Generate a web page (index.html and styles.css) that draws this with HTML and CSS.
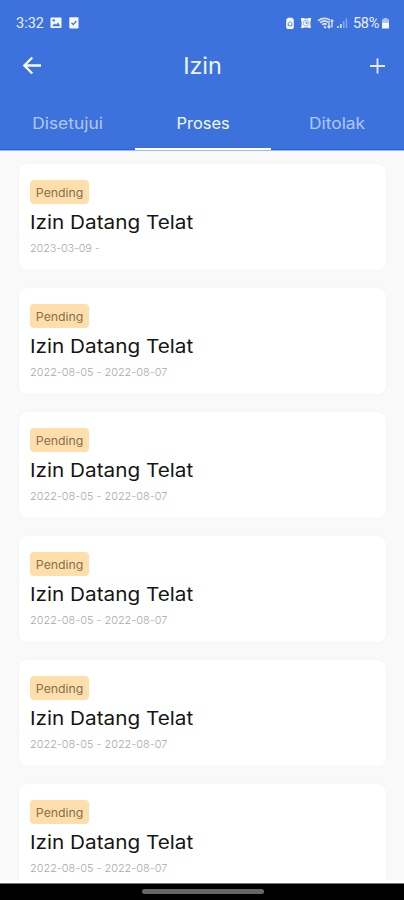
FILE: index.html
```
<!DOCTYPE html>
<html lang="id">
<head>
<meta charset="utf-8">
<title>Izin</title>
<link rel="stylesheet" href="styles.css">
</head>
<body>
<div class="screen">
  <header class="header">
    <div class="status">
      <div class="status-left">
        <span class="clock">3:32</span>
        <svg class="ic-image" width="12" height="12" viewBox="0 0 12 12"><rect x=".5" y=".5" width="11" height="10.5" rx="1" fill="#f4f8ff"/><path d="M2 9.3 4.5 6.4l1.700 1.400L8 5.300l2.200 4z" fill="#3d72dc"/><rect x="2.500" y="2.400" width="2.400" height="2" fill="#3d72dc"/></svg>
        <svg class="ic-check" width="10" height="12" viewBox="0 0 10 12"><rect x=".3" y=".3" width="9.200" height="11.200" rx="1" fill="#f4f8ff"/><path d="M2.500 5.800 4.300 7.600 7.300 4" fill="none" stroke="#3d72dc" stroke-width="1.300"/></svg>
      </div>
      <div class="status-right">
        <svg width="10" height="13" viewBox="0 0 10 13"><path d="M3 .7h4l1.800 1.700v8L7.800 12H2.200L1.200 10.400v-8z" fill="#f4f8ff"/><path d="M2.800 6.500 5 4.600 7.200 6.500M3.300 6.500v2.300h3.400V6.500" fill="none" stroke="#3d72dc" stroke-width=".8"/></svg>
        <svg class="ic-alarm" width="12" height="12" viewBox="0 0 12 12"><path d="M1 1h2.500l1 .6h3L8.500 1H11v2.500l-.6 1v4l.6 2.500H9L7.700 10.500H4.300L3 11H1l.6-2.500v-4L1 3.500z" fill="#f4f8ff"/><circle cx="6" cy="6" r="2.900" fill="none" stroke="#7fa3ea" stroke-width=".7"/><path d="M6 4.300V6.200H7.800" fill="none" stroke="#3d72dc" stroke-width=".9"/></svg>
        <svg class="ic-wifi" width="17" height="12" viewBox="0 0 17 12"><path d="M1 3.700Q7-.4 13 3M3.200 5.700Q7.500 2.300 11 5.200M5.400 7.800Q7.700 5.700 9.600 7.600M7 9.500 9 11" fill="none" stroke="#d5e2fb" stroke-width="1.800"/><path d="M12 4v6.500M10.500 9l1.500 1.800L13.500 9M15 10.500V3M13.700 4.500 15 3 16.300 4.500" fill="none" stroke="#d5e2fb" stroke-width="1.400"/></svg>
        <svg class="ic-signal" width="12" height="12" viewBox="0 0 12 12"><path d="M1 11V9h1.700v2zM4 11V7h1.700v4z" fill="#d5e2fb"/><path d="M7 11V4h1.500v7zM9.700 11V1.500h1.500V11z" fill="#83a8ee"/></svg>
        <span class="percent">58%</span>
        <svg class="ic-battery" width="9" height="13" viewBox="0 0 9 13"><path d="M2.700 1h3.600v1.200H8V6H1V2.200h1.700z" fill="#a8c2f4"/><path d="M1 5.800h7v5.700H1z" fill="#f4f8ff"/></svg>
      </div>
    </div>
    <div class="bar">
      <svg width="20" height="20" viewBox="0 0 20 20"><path d="M19 9.500H2.500M10.300 1.500 2.300 9.500l8 8" fill="none" stroke="#f7faff" stroke-width="2.300"/></svg>
      <h1>Izin</h1>
      <svg class="plus" width="18" height="18" viewBox="0 0 18 18"><path d="M9.500 1.500v15M2 9h15" fill="none" stroke="#e4edff" stroke-width="1.800"/></svg>
    </div>
    <nav class="tabs">
      <div class="tab"><span class="label">Disetujui</span></div>
      <div class="tab active"><span class="label">Proses</span></div>
      <div class="tab"><span class="label">Ditolak</span></div>
    </nav>
  </header>
  <main class="list">
    <article class="card"><div class="badge"><span>Pending</span></div><h2>Izin Datang Telat</h2><p class="open">2023-03-09 -</p></article>
    <article class="card"><div class="badge"><span>Pending</span></div><h2>Izin Datang Telat</h2><p>2022-08-05 - 2022-08-07</p></article>
    <article class="card"><div class="badge"><span>Pending</span></div><h2>Izin Datang Telat</h2><p>2022-08-05 - 2022-08-07</p></article>
    <article class="card"><div class="badge"><span>Pending</span></div><h2>Izin Datang Telat</h2><p>2022-08-05 - 2022-08-07</p></article>
    <article class="card"><div class="badge"><span>Pending</span></div><h2>Izin Datang Telat</h2><p>2022-08-05 - 2022-08-07</p></article>
    <article class="card"><div class="badge"><span>Pending</span></div><h2>Izin Datang Telat</h2><p>2022-08-05 - 2022-08-07</p></article>
  </main>
  <footer class="system-nav"><div class="handle"></div></footer>
</div>
</body>
</html>
```
FILE: styles.css
```
* { box-sizing: border-box; margin: 0; }
body { background: #f9f9f9; font-family: Inter, sans-serif; }
svg { display: block; flex: none; }
.screen { width: 404px; height: 900px; display: flex; flex-direction: column; overflow: hidden; }
.header { height: 151px; flex: none; background: #3d72dc; border-bottom: 1px solid #9bbcf0; }
.status { height: 46px; padding: 0 14px 0 16px; display: flex; justify-content: space-between; align-items: center; color: #e8f0ff; font-family: Roboto, sans-serif; font-size: 14.5px; }
.status-left, .status-right { display: flex; align-items: center; }
.clock { width: 34px; }
.ic-check { margin-left: 7px; }
.ic-alarm { margin-left: 5px; }
.ic-wifi { margin-left: 5px; }
.ic-signal { margin-left: 2px; }
.percent { width: 28px; margin-left: 5px; letter-spacing: -.3px; }
.ic-battery { margin-right: 0; }
.bar { height: 39px; padding: 0 18px 0 22px; display: grid; grid-template-columns: 20px 1fr 18px; align-items: center; text-align: center; }
.bar h1 { font-size: 22.5px; line-height: 28px; font-weight: 400; color: #f0f5ff; transform: translate(-2.5px, 0) scaleX(1.04); }
.tabs { height: 65px; display: grid; grid-template-columns: 135px 136px 133px; text-align: center; font-size: 15.5px; line-height: 20px; color: #b0c9f8; }
.tab { padding-top: 29px; border-bottom: 1px solid #2466d6; }
.label { display: inline-block; transform: scaleX(1.12); }
.tab.active { color: #f4f8ff; border-bottom: 2px solid #fff; }
.active .label { transform: scaleX(1.06); }
.list { flex: 1; min-height: 0; overflow: hidden; padding: 13px 18px 0 19px; display: flex; flex-direction: column; gap: 18px; border-bottom: 3px solid #fff; }
.card { flex: none; height: 106px; padding: 16px 11px; background: #fff; border-radius: 8px; box-shadow: 0 0 2px #eee; }
.badge { width: 59px; height: 24px; border-radius: 4px; background: #fedfac; color: #86704f; font-size: 11.2px; line-height: 26px; text-align: center; }
.badge span { display: inline-block; transform: scaleX(1.1); }
.card h2 { margin-top: 6px; font-size: 18.5px; line-height: 24px; font-weight: 400; color: #151515; white-space: nowrap; transform: scaleX(1.12); transform-origin: left; }
.card p { margin-top: 7px; font-size: 10.5px; line-height: 15px; color: #aaa; font-weight: 300; white-space: nowrap; transform: scaleX(1.04); transform-origin: left; }
.card .open { letter-spacing: -.15px; }
.system-nav { height: 17px; flex: none; background: #000; border-top: 1px solid #777; padding-top: 5px; }
.handle { width: 122px; height: 5px; margin-left: 142px; border-radius: 3px; background: #666; }
```
